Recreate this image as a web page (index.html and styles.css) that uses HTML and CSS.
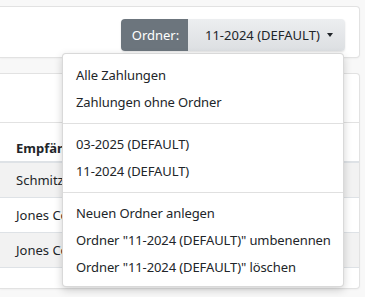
FILE: index.html
```html
<!DOCTYPE html>
<html lang="de">
<head>
<meta charset="utf-8">
<link rel="stylesheet" href="styles.css">
</head>
<body>
<div class="page">
  <div class="card toolbar">
    <div class="folder-select">
      <span class="folder-label">Ordner:</span>
      <button class="folder-toggle">11-2024 (DEFAULT)<span class="caret"></span></button>
      <div class="menu">
        <a class="menu-item">Alle Zahlungen</a>
        <a class="menu-item">Zahlungen ohne Ordner</a>
        <div class="menu-divider"></div>
        <a class="menu-item">03-2025 (DEFAULT)</a>
        <a class="menu-item">11-2024 (DEFAULT)</a>
        <div class="menu-divider"></div>
        <a class="menu-item">Neuen Ordner anlegen</a>
        <a class="menu-item">Ordner "11-2024 (DEFAULT)" umbenennen</a>
        <a class="menu-item">Ordner "11-2024 (DEFAULT)" löschen</a>
      </div>
    </div>
  </div>
  <div class="card list">
    <div class="list-header"></div>
    <table class="payments">
      <thead>
        <tr><th class="col-name">Empfänger</th><th class="col-rest"></th></tr>
      </thead>
      <tbody>
        <tr class="striped"><td class="col-name">Schmitz GmbH</td><td class="col-rest"></td></tr>
        <tr><td class="col-name">Jones Consulting</td><td class="col-rest"></td></tr>
        <tr class="striped"><td class="col-name">Jones Consulting</td><td class="col-rest"></td></tr>
      </tbody>
    </table>
  </div>
</div>
</body>
</html>
```
FILE: styles.css
```css
* { box-sizing: border-box; }
html, body { margin: 0; padding: 0; }
body {
  background: #f8f8f8;
  font-family: "Noto Sans", "Open Sans", sans-serif;
  font-size: 13px;
  color: #212529;
  width: 365px;
  height: 297px;
  overflow: hidden;
}
.page {
  padding: 6px 5px 0 0;
  display: flex;
  flex-direction: column;
  gap: 15px;
}
.card {
  background: #fff;
  border: 1px solid #e2e2e2;
  border-left: none;
  border-radius: 0 4px 4px 0;
  box-shadow: 0 1px 2px rgba(0,0,0,0.04);
}
.toolbar {
  height: 52px;
  display: flex;
  justify-content: flex-end;
  align-items: flex-start;
  padding: 12px 14px 0 0;
}
.folder-select {
  position: relative;
  display: flex;
  height: 32px;
  border-radius: 4px;
  box-shadow: 0 1px 2px rgba(0,0,0,0.12);
}
.folder-label {
  width: 67px;
  background: #6c757d;
  color: #fff;
  border-radius: 4px 0 0 4px;
  display: flex;
  align-items: center;
  justify-content: center;
  padding-left: 2px;
}
.folder-toggle {
  width: 157px;
  border: none;
  border-radius: 0 4px 4px 0;
  background: linear-gradient(#eceef0, #dcdfe2);
  font: inherit;
  color: #212529;
  display: flex;
  align-items: center;
  padding: 0 0 0 17px;
  cursor: pointer;
}
.caret {
  display: inline-block;
  margin-left: 7px;
  border-top: 4px solid #212529;
  border-left: 3.5px solid transparent;
  border-right: 3.5px solid transparent;
}
.menu {
  position: absolute;
  top: calc(100% + 2px);
  right: 1px;
  width: 282px;
  background: #fff;
  border: 1px solid rgba(0,0,0,0.15);
  border-radius: 4px;
  box-shadow: 0 3px 8px rgba(0,0,0,0.18);
  padding: 8px 0 5px;
  z-index: 10;
  display: flex;
  flex-direction: column;
}
.menu-item {
  display: block;
  height: 27px;
  line-height: 27px;
  padding: 0 13px;
  color: #212529;
  white-space: nowrap;
  letter-spacing: -0.1px;
}
.menu-divider {
  height: 1px;
  margin: 7px 0;
  background: #e0e0e0;
}
.list {
  height: 216px;
}
.list-header {
  height: 49px;
  border-bottom: 1px solid #e2e2e2;
}
.payments {
  width: 100%;
  border-collapse: collapse;
  table-layout: fixed;
}
.payments .col-name {
  width: 62px;
  overflow: hidden;
  text-overflow: clip;
  white-space: nowrap;
  padding-right: 0;
}
.payments th {
  text-align: left;
  font-weight: 700;
  height: 39px;
  padding: 12px 0 0 16px;
  border-bottom: 2px solid #dee2e6;
}
.payments td {
  height: 35px;
  padding: 0 0 0 16px;
  border-bottom: 1px solid #dee2e6;
}
.payments tr.striped td {
  background: #f2f2f2;
}
```
